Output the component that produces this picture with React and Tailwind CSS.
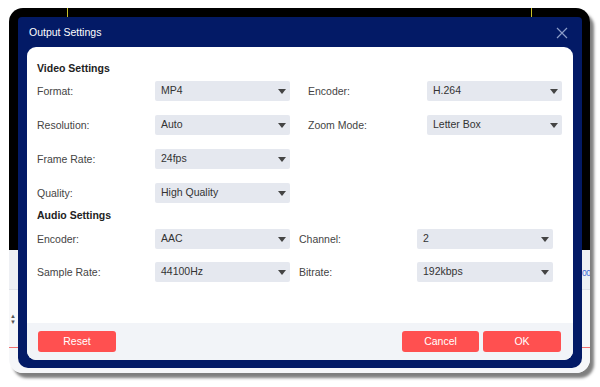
import React from "react";

const font = { fontFamily: '"Liberation Sans", Arial, sans-serif' };

function Select({ value }) {
  return (
    <div className="h-[20px] bg-[#e5e8ef] rounded-[2px] flex items-center justify-between pl-[6px] pr-[4px] text-[10.5px] text-[#333]">
      <span>{value}</span>
      <svg width="8" height="5" viewBox="0 0 8 5">
        <path d="M0 0 L8 0 L4 5 Z" fill="#444" />
      </svg>
    </div>
  );
}

function Label({ children }) {
  return <div className="text-[10.5px] text-[#444] leading-[20px]">{children}</div>;
}

export default function App() {
  return (
    <div className="w-[600px] h-[387px] bg-white overflow-hidden" style={font}>
      <div className="ml-[9px] mt-[8px] w-[581px] h-[365px] relative rounded-[14px] overflow-hidden shadow-[4px_5px_3px_rgba(0,0,0,0.5)] flex flex-col">
        {/* background app */}
        <div className="h-[242px] bg-black relative">
          <div className="absolute left-[58px] top-0 w-[1px] h-[10px] bg-[#c9c22a]" />
          <div className="absolute left-[522px] top-0 w-[1px] h-[10px] bg-[#c9c22a]" />
        </div>
        <div className="flex-1 bg-[#f6f7f9] relative flex flex-col">
          <div className="h-[40px] border-b border-[#dfe2e8] bg-[#eef0f4]" />
          <div className="h-[57px] flex items-center pl-[1px]">
            <div className="flex flex-col text-[6px] leading-[6px] text-[#555]">
              <span>▲</span>
              <span>▼</span>
            </div>
          </div>
          <div className="h-[1px] bg-[#f07070]" />
          <div className="absolute left-[573px] top-[17px] text-[8.5px] tracking-[-0.5px] text-[#3d66d6]">00</div>
        </div>

        {/* dialog */}
        <div className="absolute left-[9px] top-[9px] w-[564px] h-[351px] bg-[#031a66] rounded-t-[4px] rounded-b-[10px] flex flex-col">
          <div className="h-[30px] pt-[2px] flex items-center justify-between pl-[11px] pr-[14px]">
            <span className="text-[10.5px] text-white">Output Settings</span>
            <svg width="12" height="12" viewBox="0 0 12 12">
              <path d="M1 1 L11 11 M11 1 L1 11" stroke="#8c9cc8" strokeWidth="1.2" />
            </svg>
          </div>
          <div className="flex-1 mx-[9px] mb-[8px] bg-white rounded-[9px] overflow-hidden flex flex-col">
            <div className="pt-[14px] pl-[10px] flex flex-col">
              <div className="text-[10.5px] font-bold text-[#222] leading-[14px]">Video Settings</div>
              <div className="mt-[6px] grid grid-cols-[118px_135px_18px_119px_135px] gap-y-[14px] items-center">
                <Label>Format:</Label>
                <Select value="MP4" />
                <div />
                <Label>Encoder:</Label>
                <Select value="H.264" />

                <Label>Resolution:</Label>
                <Select value="Auto" />
                <div />
                <Label>Zoom Mode:</Label>
                <Select value="Letter Box" />

                <Label>Frame Rate:</Label>
                <Select value="24fps" />
                <div />
                <div />
                <div />

                <Label>Quality:</Label>
                <Select value="High Quality" />
                <div />
                <div />
                <div />
              </div>
              <div className="mt-[5px] text-[10.5px] font-bold text-[#222] leading-[14px]">Audio Settings</div>
              <div className="mt-[7px] grid grid-cols-[118px_135px_9px_118px_136px] gap-y-[13px] items-center">
                <Label>Encoder:</Label>
                <Select value="AAC" />
                <div />
                <Label>Channel:</Label>
                <Select value="2" />

                <Label>Sample Rate:</Label>
                <Select value="44100Hz" />
                <div />
                <Label>Bitrate:</Label>
                <Select value="192kbps" />
              </div>
            </div>
            <div className="flex-1" />
            <div className="h-[37px] bg-[#f2f4f8] flex items-center justify-between pl-[11px] pr-[12px]">
              <button className="h-[21px] w-[78px] rounded-[3px] bg-[#ff5050] text-white text-[10.5px]">Reset</button>
              <div className="flex gap-[4px]">
                <button className="h-[21px] w-[77px] rounded-[3px] bg-[#ff5050] text-white text-[10.5px]">Cancel</button>
                <button className="h-[21px] w-[78px] rounded-[3px] bg-[#ff5050] text-white text-[10.5px]">OK</button>
              </div>
            </div>
          </div>
        </div>
      </div>
    </div>
  );
}
